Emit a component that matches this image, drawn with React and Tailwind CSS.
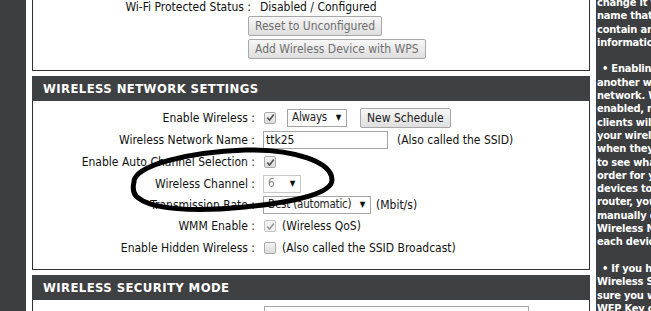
const FONT = { fontFamily: '"DejaVu Sans Condensed", "DejaVu Sans", sans-serif' }

const HELP_LINES = [
  'change it to a',
  'name that does',
  'contain any personal',
  'information.',
  '',
  '• Enabling Hidden',
  'another way to',
  'network. With this',
  'enabled, no wireless',
  'clients will be',
  'your wireless',
  'when they perform',
  'to see what\u2019s',
  'order for your',
  'devices to connect',
  'router, you will',
  'manually enter the',
  'Wireless Network',
  'each device.',
  '',
  '• If you have',
  'Wireless Security,',
  'sure you write',
  'WEP Key or',
  'that you have',
]

function Check({ checked, disabled }) {
  return (
    <span
      className={
        'inline-flex w-[12px] h-[12px] items-center justify-center rounded-[2px] border ' +
        (disabled ? 'border-[#c4c4c4] bg-[#f2f2f2]' : 'border-[#a9a9a9] bg-gradient-to-b from-[#f4f4f4] to-[#dcdcdc]')
      }
    >
      {checked && (
        <svg width="9" height="9" viewBox="0 0 9 9">
          <path
            d="M1.2 4.6 L3.6 7 L7.8 1.4"
            fill="none"
            stroke={disabled ? '#9a9a9a' : '#555'}
            strokeWidth="1.7"
          />
        </svg>
      )}
    </span>
  )
}

function Select({ value, width, muted }) {
  return (
    <span
      className={
        'inline-flex items-center justify-between h-[18px] border bg-white pl-[4px] pr-[5px] text-[11.5px] tracking-[-0.2px] ' +
        (muted ? 'border-[#c8c8c8] text-[#888]' : 'border-[#a5a5a5] text-[#222]')
      }
      style={{ width }}
    >
      <span className="whitespace-nowrap">{value}</span>
      <span className="text-[8px] text-[#111]">▼</span>
    </span>
  )
}

function Button({ children, muted, className = '' }) {
  return (
    <span
      className={
        'inline-flex items-center h-[20px] px-[6px] rounded-[2px] border border-[#a8a8a8] bg-gradient-to-b from-[#f7f7f7] to-[#dedede] text-[12px] ' +
        (muted ? 'text-[#6f6f6f] ' : 'text-[#222] ') +
        className
      }
    >
      {children}
    </span>
  )
}

function Row({ label, h, children }) {
  return (
    <div className="flex items-center shrink-0" style={{ height: h }}>
      <div className="w-[222px] text-right whitespace-nowrap">{label}&nbsp;:</div>
      <div className="pl-[9px] flex items-center whitespace-nowrap">{children}</div>
    </div>
  )
}

function Header({ title }) {
  return (
    <div className="h-[25px] shrink-0 bg-[#3f4042] flex items-center pl-[11px]">
      <span className="text-white font-bold text-[13px] tracking-[0.4px]">{title}</span>
    </div>
  )
}

export default function App() {
  return (
    <div className="relative w-[651px] h-[311px] overflow-hidden flex bg-white text-[#111]" style={FONT}>
      <div className="w-[26px] shrink-0 bg-[#3d3e40]" />
      <div className="w-[6px] shrink-0" />

      <div className="w-[558px] shrink-0 flex flex-col text-[12px]">
        {/* WPS panel (cut off at top) */}
        <div className="h-[71px] shrink-0 border-x border-b border-[#333] flex flex-col">
          <div className="flex items-center h-[14px]">
            <div className="w-[218px] text-right whitespace-nowrap">Wi-Fi Protected Status&nbsp;:</div>
            <div className="pl-[9px] whitespace-nowrap">Disabled / Configured</div>
          </div>
          <div className="pl-[215px] mt-[2px]">
            <Button muted>Reset to Unconfigured</Button>
          </div>
          <div className="pl-[215px] mt-[3px]">
            <Button muted>Add Wireless Device with WPS</Button>
          </div>
        </div>

        <div className="h-[5px] shrink-0" />
        <Header title="WIRELESS NETWORK SETTINGS" />

        <div className="h-[169px] shrink-0 border-x border-b border-[#333] pt-[6px]">
          <Row label="Enable Wireless" h={21}>
            <Check checked />
            <span className="ml-[11px]">
              <Select value="Always" width={60} />
            </span>
            <Button className="ml-[13px]">New Schedule</Button>
          </Row>
          <Row label="Wireless Network Name" h={23}>
            <span className="ml-[-1px] inline-flex items-center w-[125px] h-[18px] border border-[#a5a5a5] pl-[2px] text-[12px]">
              ttk25
            </span>
            <span className="ml-[9px]">(Also called the SSID)</span>
          </Row>
          <Row label="Enable Auto Channel Selection" h={22}>
            <Check checked />
          </Row>
          <Row label="Wireless Channel" h={21}>
            <span className="ml-[-1px]">
              <Select value="6" width={38} muted />
            </span>
          </Row>
          <Row label="Transmission Rate" h={21}>
            <span className="ml-[-1px]">
              <Select value="Best (automatic)" width={108} />
            </span>
            <span className="ml-[5px]">(Mbit/s)</span>
          </Row>
          <Row label="WMM Enable" h={22}>
            <Check checked disabled />
            <span className="ml-[6px]">(Wireless QoS)</span>
          </Row>
          <Row label="Enable Hidden Wireless" h={22}>
            <Check />
            <span className="ml-[6px]">(Also called the SSID Broadcast)</span>
          </Row>
        </div>

        <div className="h-[5px] shrink-0" />
        <Header title="WIRELESS SECURITY MODE" />
        <div className="flex-1 min-h-0 overflow-hidden border-x border-[#333] pt-[6px] pl-[231px]">
          <div className="w-[265px] h-[18px] border border-[#a5a5a5]" />
        </div>
      </div>

      <div className="w-[6px] shrink-0" />
      <div className="flex-1 bg-[#3d3e40] overflow-hidden pl-[1px]">
        <div className="mt-[-4px] text-white font-bold text-[11px] leading-[13.3px] tracking-[-0.2px] whitespace-nowrap">
          {HELP_LINES.map((line, i) => (
            <div key={i} className={line.startsWith('•') ? 'pl-[5px]' : ''}>
              {line || '\u00a0'}
            </div>
          ))}
        </div>
      </div>

      {/* hand-drawn marker ellipse around the channel row */}
      <svg className="absolute left-0 top-0 pointer-events-none" width="651" height="311">
        <path
          d="M134 182 C134 165 190 152 245 150 C295 149 332 162 332 180 C332 195 285 203 245 207 C195 212 150 210 136 196 C132 191 133 186 134 182 Z"
          fill="none"
          stroke="#000"
          strokeWidth="5"
        />
      </svg>
    </div>
  )
}
